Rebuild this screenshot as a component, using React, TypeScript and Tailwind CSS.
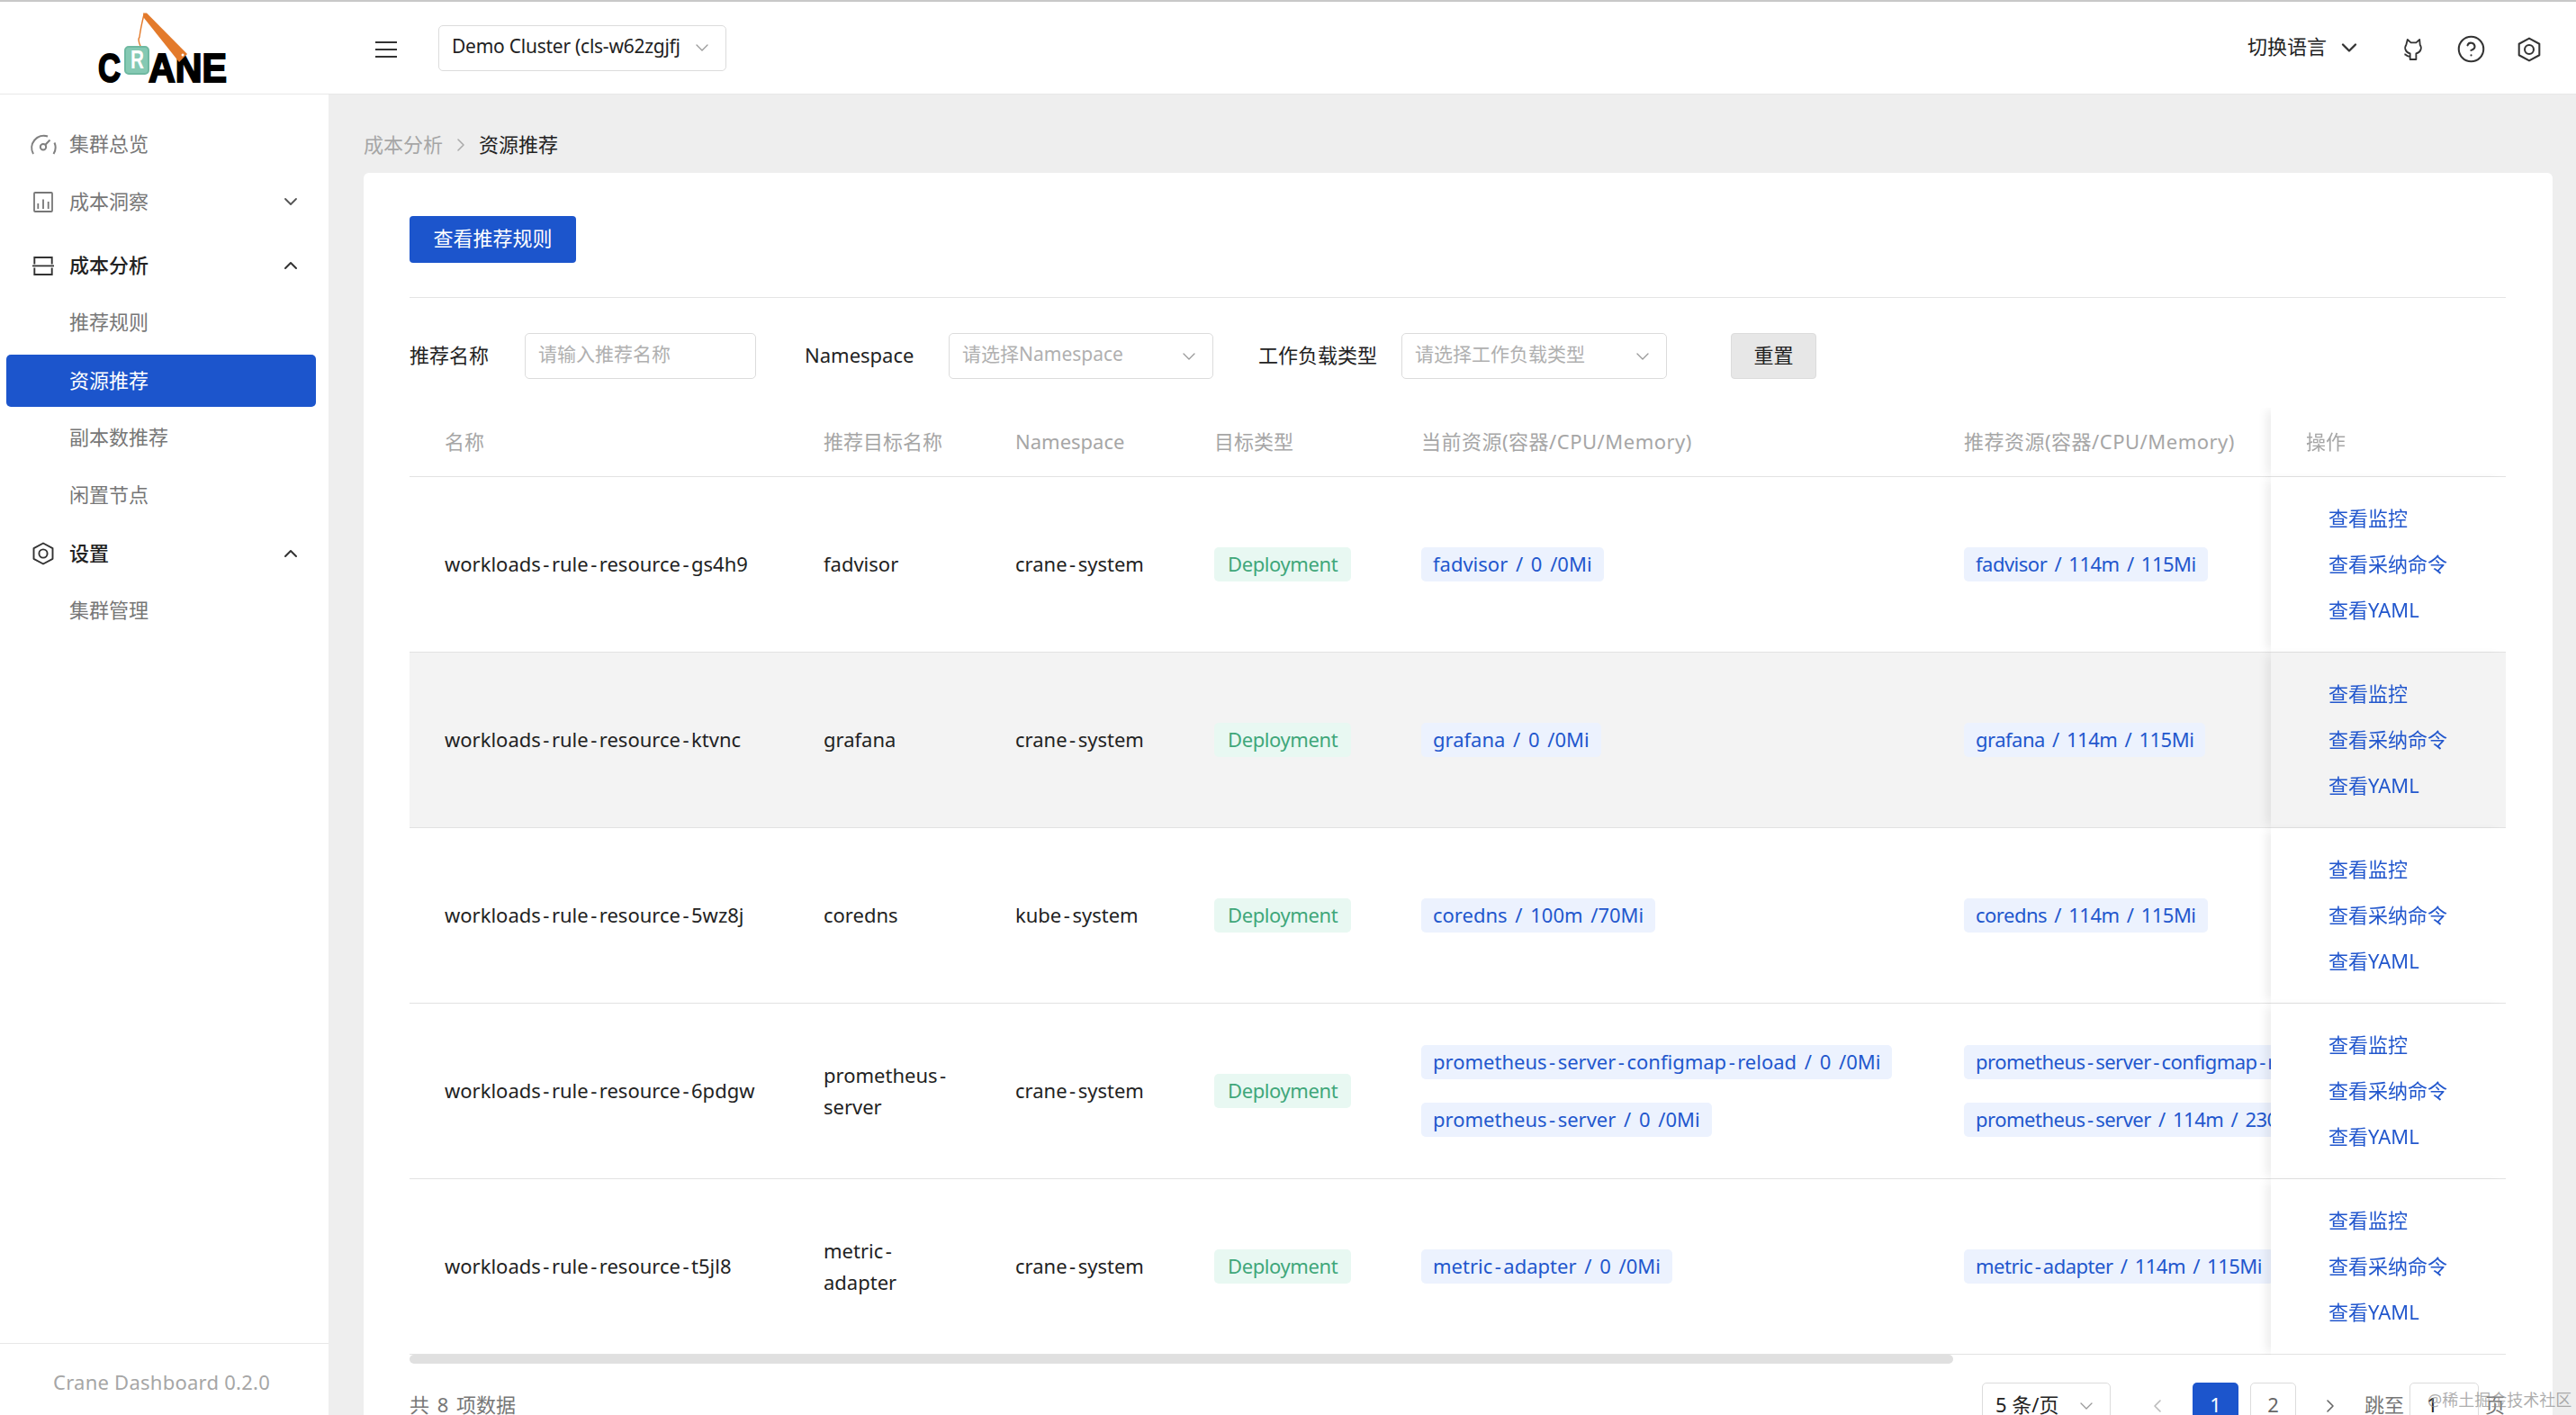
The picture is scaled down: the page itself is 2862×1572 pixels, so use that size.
import { Fragment } from 'react';
import { ChevronDown, ChevronLeft, ChevronRight, ChevronUp, CircleHelp } from 'lucide-react';

const BLUE = 'text-[#2257cd]';

function HexIcon({ className }: { className?: string }) {
  return (
    <svg viewBox="0 0 24 26" fill="none" stroke="currentColor" strokeWidth="1.9" className={className}>
      <path d="M12 1.5 22.5 7.2v11.6L12 24.5 1.5 18.8V7.2Z" strokeLinejoin="round" />
      <circle cx="12" cy="13" r="4.6" />
    </svg>
  );
}

function DashIcon({ className }: { className?: string }) {
  return (
    <svg viewBox="0 0 30 23" fill="none" stroke="currentColor" strokeWidth="2" className={className}>
      <path d="M4 22A13.5 13.5 0 0 1 20 2.5" />
      <path d="M27.5 9.5A13.5 13.5 0 0 1 26.5 22" />
      <circle cx="15" cy="14.3" r="3.2" />
      <path d="M17.2 12 22.5 6.5" />
    </svg>
  );
}

function ChartIcon({ className }: { className?: string }) {
  return (
    <svg viewBox="0 0 22 23" fill="none" stroke="currentColor" strokeWidth="1.8" className={className}>
      <rect x="1" y="1" width="20" height="21" rx="1" />
      <path d="M5.3 19v-6M11 19V8.5M16.7 19v-8" />
    </svg>
  );
}

function CostIcon({ className }: { className?: string }) {
  return (
    <svg viewBox="0 0 24 21" fill="none" stroke="currentColor" strokeWidth="1.9" className={className}>
      <path d="M2.3 8.5V1h19.4v7.5M2.3 12.5V20h19.4v-7.5M0 10.4h24" />
    </svg>
  );
}

function GithubIcon({ className }: { className?: string }) {
  return (
    <svg viewBox="0 0 24 26" fill="none" stroke="currentColor" strokeWidth="1.9" strokeLinejoin="round" className={className}>
      <path d="M5 2l4 3.500h6l4-3.500.5 6c2.500 3.500 1 9-4.500 10v7H8v-7c-5.500-1-7-6.500-4.500-10Z" />
      <path d="M7.500 21.500c-3 .5-3.500-2-6-2.500" />
    </svg>
  );
}

function Logo() {
  return (
    <svg viewBox="100 10 160 92" className="w-[160px] h-[92px]">
      <path d="M160 16c-2 8-4 17-5 25-2 3-1 6 1 10" fill="none" stroke="#e37a2b" strokeWidth="1.400" />
      <text x="109" y="91" textLength="25" lengthAdjust="spacingAndGlyphs" fontFamily="Liberation Sans" fontWeight="700" fontSize="45" fill="#000" stroke="#000" strokeWidth="2">C</text>
      <text x="165" y="91" textLength="87" lengthAdjust="spacingAndGlyphs" fontFamily="Liberation Sans" fontWeight="700" fontSize="45" fill="#000" stroke="#000" strokeWidth="2">ANE</text>
      <path d="M159 14.500h4L208 60l-9 9-39-49Z" fill="#e37a2b" />
      <rect x="139" y="52" width="26" height="30" rx="4" fill="#85c9b3" stroke="#6fb9a1" strokeWidth="2" />
      <text x="145" y="76" textLength="15" lengthAdjust="spacingAndGlyphs" fontFamily="Liberation Sans" fontWeight="700" fontSize="29" fill="#fff">R</text>
      <circle cx="203" cy="61" r="1.500" fill="#fff" />
    </svg>
  );
}

// the hyphens in the reference are wider than this font's, so each one gets a little room
function Dashed({ text }: { text: string }) {
  const parts = text.split('-');
  return (
    <>
      {parts.map((p, i) => (
        <Fragment key={i}>
          {p}
          {i < parts.length - 1 && <span className="px-[2.5px]">-</span>}
        </Fragment>
      ))}
    </>
  );
}

const navItems = [
  { label: '集群总览', icon: <DashIcon className="w-[30px] h-[23px] ml-[-3px] mr-[14px] text-[#808080]" />, cls: 'text-[#777]', wrap: '' },
  { label: '成本洞察', icon: <ChartIcon className="w-[22px] h-[23px] ml-[1px] mr-[18px] text-[#777]" />, cls: 'text-[#777]', chevron: 'down', wrap: 'mt-[6px]' },
  { label: '成本分析', icon: <CostIcon className="w-[24px] h-[21px] mr-[17px] text-[#333]" />, cls: 'text-[#222] font-medium', chevron: 'up', wrap: 'mt-[13px]' },
  { label: '推荐规则', cls: 'text-[#777] pl-[41px]', wrap: 'mt-[5px]' },
  { label: '资源推荐', cls: 'text-white pl-[41px]', active: true, wrap: 'mt-[7px]' },
  { label: '副本数推荐', cls: 'text-[#777] pl-[41px]', wrap: 'mt-[5px]' },
  { label: '闲置节点', cls: 'text-[#777] pl-[41px]', wrap: 'mt-[6px]' },
  { label: '设置', icon: <HexIcon className="w-[24px] h-[26px] mr-[17px] text-[#333]" />, cls: 'text-[#222] font-medium', chevron: 'up', wrap: 'mt-[7px]' },
  { label: '集群管理', cls: 'text-[#777] pl-[41px]', wrap: 'mt-[5px]' },
];

type Row = { name: string; target: string; ns: string; current: string[]; rec: string[]; hover?: boolean };

const rows: Row[] = [
  { name: 'workloads-rule-resource-gs4h9', target: 'fadvisor', ns: 'crane-system', current: ['fadvisor / 0 /0Mi'], rec: ['fadvisor / 114m / 115Mi'] },
  { name: 'workloads-rule-resource-ktvnc', target: 'grafana', ns: 'crane-system', current: ['grafana / 0 /0Mi'], rec: ['grafana / 114m / 115Mi'], hover: true },
  { name: 'workloads-rule-resource-5wz8j', target: 'coredns', ns: 'kube-system', current: ['coredns / 100m /70Mi'], rec: ['coredns / 114m / 115Mi'] },
  {
    name: 'workloads-rule-resource-6pdgw',
    target: 'prometheus-server',
    ns: 'crane-system',
    current: ['prometheus-server-configmap-reload / 0 /0Mi', 'prometheus-server / 0 /0Mi'],
    rec: ['prometheus-server-configmap-reload / 114m / 115Mi', 'prometheus-server / 114m / 230Mi'],
  },
  { name: 'workloads-rule-resource-t5jl8', target: 'metric-adapter', ns: 'crane-system', current: ['metric-adapter / 0 /0Mi'], rec: ['metric-adapter / 114m / 115Mi'] },
];

function ResourceTags({ items, tight }: { items: string[]; tight?: boolean }) {
  return (
    <div className="flex flex-col items-start gap-[26px]">
      {items.map((t) => (
        <span
          key={t}
          className={`h-[38px] leading-[37px] px-[13px] rounded-[5px] bg-[#ecf2fe] whitespace-nowrap [word-spacing:3px] ${tight ? 'tracking-[-0.5px]' : ''} ${BLUE}`}
        >
          <Dashed text={t} />
        </span>
      ))}
    </div>
  );
}

function SelectBox({ text, className, textClass }: { text: string; className: string; textClass: string }) {
  return (
    <div className={`h-[51px] flex items-center justify-between border border-[#dcdcdc] rounded-[5px] bg-white pl-[14px] pr-[14px] ${className}`}>
      <span className={`whitespace-nowrap pb-[3px] ${textClass}`}>{text}</span>
      <ChevronDown className="w-[24px] h-[24px] text-[#999] shrink-0" strokeWidth={1.3} />
    </div>
  );
}

export default function App() {
  return (
    <div className="relative h-[1572px] overflow-hidden flex flex-col bg-[#eeeeee] text-[22px] text-[#222] font-['Noto_Sans','Noto_Sans_CJK_SC',sans-serif]">
      <div className="h-[2px] bg-[#c8c8c8] shrink-0" />

      {/* Header */}
      <header className="h-[103px] shrink-0 flex items-center bg-white border-b border-[#e8e8e8]">
        <div className="w-[365px] shrink-0 self-start pl-[100px] pt-[8px]">
          <Logo />
        </div>
        <div className="w-[24px] h-[18px] ml-[52px] mt-[4px] flex flex-col justify-between">
          <span className="h-[2px] bg-[#333]" />
          <span className="h-[2px] bg-[#333]" />
          <span className="h-[2px] bg-[#333]" />
        </div>
        <SelectBox text="Demo Cluster (cls-w62zgjfj" textClass="text-[#222] text-[21px] tracking-[-0.25px]" className="w-[320px] ml-[46px]" />
        <div className="ml-auto flex items-center text-[#222]">
          <span className="pb-[3px] ml-[-1px]">切换语言</span>
          <ChevronDown className="w-[28px] h-[28px] ml-[11px] text-[#333]" strokeWidth={2} />
          <GithubIcon className="w-[23px] h-[25px] ml-[46px] mt-[3px] text-[#333]" />
          <CircleHelp className="w-[33px] h-[33px] ml-[36px] mt-[3px] text-[#333]" strokeWidth={1.5} />
          <HexIcon className="w-[26px] h-[28px] ml-[35px] mr-[39px] mt-[3px] text-[#333]" />
        </div>
      </header>

      <div className="flex-1 flex min-h-0">
        {/* Sidebar */}
        <aside className="w-[365px] shrink-0 bg-white flex flex-col">
          <nav className="pt-[26px] pl-[7px] pr-[14px]">
            {navItems.map((it) => (
              <div
                key={it.label}
                className={`h-[58px] flex items-center rounded-[5px] pl-[29px] pr-[16px] ${it.wrap} ${it.active ? 'bg-[#1c55cc]' : ''}`}
              >
                {it.icon}
                <span className={`pb-[2px] ${it.cls}`}>{it.label}</span>
                {it.chevron === 'down' && <ChevronDown className="ml-auto w-[24px] h-[24px] text-[#555]" strokeWidth={1.8} />}
                {it.chevron === 'up' && <ChevronUp className="ml-auto w-[24px] h-[24px] text-[#333]" strokeWidth={2} />}
              </div>
            ))}
          </nav>
          <div className="mt-auto h-[80px] border-t border-[#e8e8e8] pl-[59px] pt-[26px] text-[#a6a6a6] leading-[32px] tracking-[0.25px]">
            Crane Dashboard 0.2.0
          </div>
        </aside>

        {/* Main */}
        <main className="flex-1 min-w-0 pl-[39px] pr-[26px] pt-[37px]">
          <div className="h-[36px] flex items-center mb-[14px]">
            <span className="text-[#a6a6a6]">成本分析</span>
            <ChevronRight className="w-[24px] h-[24px] mx-[8px] mt-[2px] text-[#aaa]" strokeWidth={1.5} />
            <span>资源推荐</span>
          </div>

          <section className="bg-white rounded-[6px] pt-[48px] pl-[51px] pr-[52px] h-[1500px]">
            <button className="block w-[185px] h-[52px] pb-[3px] rounded-[4px] bg-[#1c55cc] text-white">查看推荐规则</button>
            <div className="h-px bg-[#e5e5e5] mt-[38px] mb-[39px]" />

            <div className="flex items-center h-[51px]">
              <span className="w-[128px] shrink-0 pb-[3px]">推荐名称</span>
              <div className="w-[257px] h-[51px] flex items-center border border-[#dcdcdc] rounded-[5px] pl-[14px] pb-[3px] text-[21px] text-[#b0b0b0]">
                请输入推荐名称
              </div>
              <span className="w-[160px] pl-[54px] pb-[3px] shrink-0 box-content">Namespace</span>
              <SelectBox text="请选择Namespace" textClass="text-[#b0b0b0] text-[21px]" className="w-[294px]" />
              <span className="ml-[50px] w-[159px] pb-[3px] shrink-0 whitespace-nowrap">工作负载类型</span>
              <SelectBox text="请选择工作负载类型" textClass="text-[#b0b0b0] text-[21px]" className="w-[295px]" />
              <button className="ml-[71px] w-[95px] h-[51px] pb-[3px] rounded-[4px] bg-[#e7e7e7] border border-[#dcdcdc] text-[#222]">重置</button>
            </div>

            {/* Table */}
            <div className="mt-[32px] overflow-hidden">
              <table className="w-[2589px] table-fixed border-separate border-spacing-0">
                <colgroup>
                  <col className="w-[421px]" />
                  <col className="w-[213px]" />
                  <col className="w-[222px]" />
                  <col className="w-[229px]" />
                  <col className="w-[603px]" />
                  <col className="w-[640px]" />
                  <col className="w-[261px]" />
                </colgroup>
                <thead>
                  <tr className="h-[77px] text-[#a6a6a6]">
                    {['名称', '推荐目标名称', 'Namespace'].map((h) => (
                      <th key={h} className="font-normal text-left pl-[39px] pb-[1px] border-b border-[#e2e2e2] whitespace-nowrap">
                        {h}
                      </th>
                    ))}
                    <th className="font-normal text-left pl-[38px] pb-[1px] border-b border-[#e2e2e2]">目标类型</th>
                    {['当前资源(容器/CPU/Memory)', '推荐资源(容器/CPU/Memory)'].map((h) => (
                      <th key={h} className="font-normal text-left pl-[39px] pb-[1px] border-b border-[#e2e2e2] whitespace-nowrap tracking-[0.5px]">
                        {h}
                      </th>
                    ))}
                    <th className="sticky right-0 bg-white font-normal text-left pl-[39px] pb-[1px] border-b border-[#e2e2e2] shadow-[-8px_0_10px_-3px_rgba(0,0,0,0.07)]">
                      操作
                    </th>
                  </tr>
                </thead>
                <tbody>
                  {rows.map((r) => (
                    <tr key={r.name} className={`h-[195px] leading-[35px] ${r.hover ? 'bg-[#f3f3f3]' : ''}`}>
                      <td className="pl-[39px] pb-[1px] border-b border-[#e2e2e2] whitespace-nowrap">
                        <Dashed text={r.name} />
                      </td>
                      <td className="pl-[39px] pr-[39px] pb-[1px] border-b border-[#e2e2e2]">
                        <Dashed text={r.target} />
                      </td>
                      <td className="pl-[39px] pb-[1px] border-b border-[#e2e2e2]">
                        <Dashed text={r.ns} />
                      </td>
                      <td className="pl-[38px] border-b border-[#e2e2e2]">
                        <span className="inline-block h-[38px] leading-[37px] px-[15px] rounded-[5px] bg-[#e8f8f2] text-[#3fa77a] tracking-[-0.4px]">Deployment</span>
                      </td>
                      <td className="pl-[39px] border-b border-[#e2e2e2]">
                        <ResourceTags items={r.current} />
                      </td>
                      <td className="pl-[39px] border-b border-[#e2e2e2]">
                        <ResourceTags items={r.rec} tight />
                      </td>
                      <td className={`sticky right-0 pl-[64px] pb-[1px] border-b border-[#e2e2e2] shadow-[-8px_0_10px_-3px_rgba(0,0,0,0.07)] ${r.hover ? 'bg-[#f3f3f3]' : 'bg-white'}`}>
                        <div className={`flex flex-col gap-[16px] ${BLUE}`}>
                          <span>查看监控</span>
                          <span>查看采纳命令</span>
                          <span>查看YAML</span>
                        </div>
                      </td>
                    </tr>
                  ))}
                </tbody>
              </table>
            </div>
            <div className="h-[10px] w-[1715px] rounded-full bg-[#e0e0e0]" />

            {/* Pagination */}
            <div className="mt-[21px] flex items-center">
              <span className="text-[#777] pb-[3px] [word-spacing:3px]">共 8 项数据</span>
              <SelectBox text="5 条/页" textClass="text-[#222]" className="w-[143px] ml-auto" />
              <ChevronLeft className="w-[24px] h-[24px] ml-[40px] text-[#bbb]" strokeWidth={1.6} />
              <span className="w-[51px] h-[51px] ml-[27px] pb-[3px] flex items-center justify-center rounded-[5px] bg-[#1c55cc] text-white">1</span>
              <span className="w-[51px] h-[51px] ml-[13px] pb-[3px] flex items-center justify-center rounded-[5px] border border-[#dcdcdc] text-[#666]">2</span>
              <ChevronRight className="w-[24px] h-[24px] ml-[26px] text-[#666]" strokeWidth={1.6} />
              <span className="ml-[26px] pb-[3px] text-[#777]">跳至</span>
              <span className="w-[77px] h-[51px] ml-[6px] pl-[18px] pb-[3px] flex items-center rounded-[5px] border border-[#dcdcdc]">1</span>
              <span className="ml-[7px] mr-[1px] pb-[3px] text-[#777]">页</span>
            </div>
          </section>
        </main>
      </div>

      <span className="absolute left-[2697px] top-[1543px] text-[18px] leading-[24px] text-[#8a8a8a]/70 whitespace-nowrap">@稀土掘金技术社区</span>
    </div>
  );
}
